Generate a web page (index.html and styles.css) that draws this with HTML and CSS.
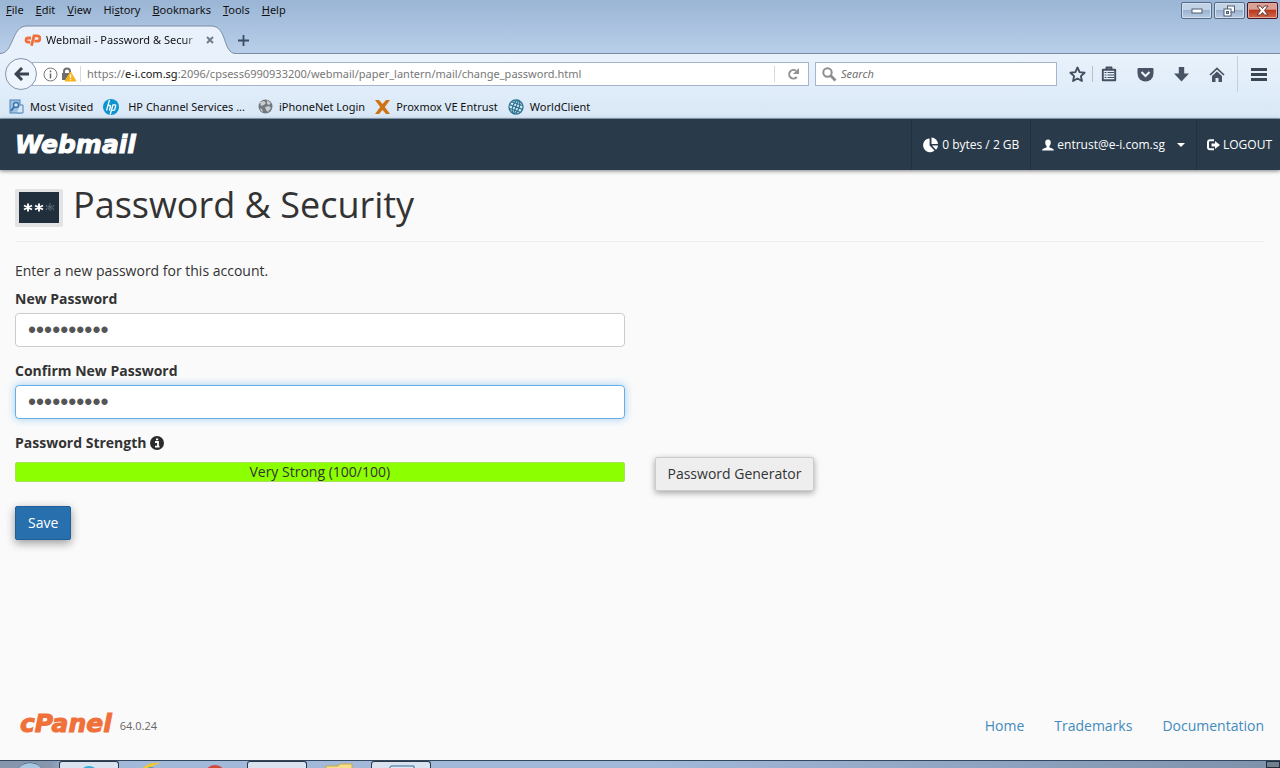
FILE: index.html
```html
<!DOCTYPE html>
<html lang="en">
<head>
<meta charset="utf-8">
<title>Webmail - Password &amp; Security</title>
<link rel="stylesheet" href="styles.css">
</head>
<body>
<div class="browser">
  <div class="titlebar">
    <nav class="menubar">
      <button type="button"><u>F</u>ile</button>
      <button type="button"><u>E</u>dit</button>
      <button type="button"><u>V</u>iew</button>
      <button type="button">Hi<u>s</u>tory</button>
      <button type="button"><u>B</u>ookmarks</button>
      <button type="button"><u>T</u>ools</button>
      <button type="button"><u>H</u>elp</button>
    </nav>
    <div class="window-controls">
      <button type="button" class="win-btn" aria-label="Minimize"><svg width="12" height="6" viewBox="0 0 12 6"><rect x="1" y="1" width="10" height="4" fill="#fff" stroke="#4c5c74"/></svg></button>
      <button type="button" class="win-btn" aria-label="Restore"><svg width="13" height="12" viewBox="0 0 13 12"><rect x="4.500" y="1" width="7" height="6" fill="#fff" stroke="#4c5c74"/><rect x="1" y="4" width="7" height="7" fill="#fff" stroke="#4c5c74"/><rect x="3.500" y="6.500" width="2" height="2" fill="#9db4d0" stroke="#4c5c74"/></svg></button>
      <button type="button" class="win-btn win-close" aria-label="Close"><svg width="13" height="11" viewBox="0 0 13 11"><path d="M1 1h3.500l2 2.500 2-2.500H12L8.500 5.500 12 10H8.500l-2-2.500-2 2.500H1l3.500-4.500z" fill="#fff" stroke="#66382f"/></svg></button>
    </div>
  </div>

  <div class="tabstrip">
    <div class="tab">
      <svg class="tab-shape" viewBox="0 0 236 29" preserveAspectRatio="none"><path d="M0 28.500C14 28.500 11 1 27 1H211C228 1 222 28.500 236 28.500V29H0z" fill="#e9f2fc"/><path d="M0 28.500C14 28.500 11 1 27 1H211C228 1 222 28.500 236 28.500" fill="none" stroke="#7c8ca3"/></svg>
      <svg class="tab-icon" width="17" height="12" viewBox="0 0 17 12" fill="none" stroke="#f0703a" stroke-width="2.800"><path d="M7 4H4.300a2 2 0 0 0-.3 4.200H6.200M7.500 11.800 10 1.800h3.200a2.500 2.500 0 0 1 0 5.400H10.500"/></svg>
      <span class="tab-title">Webmail - Password &amp; Secur</span>
      <button type="button" class="tab-close" aria-label="Close tab"><svg width="8" height="8" viewBox="0 0 8 8"><path d="M1 1l6 6M7 1L1 7" stroke="#6f7b8b" stroke-width="2"/></svg></button>
    </div>
    <button type="button" class="new-tab" aria-label="New tab"><svg width="11" height="11" viewBox="0 0 11 11"><path d="M5.500 0v11M0 5.500h11" stroke="#3c4c60" stroke-width="1.800"/></svg></button>
  </div>

  <div class="navbar">
    <button type="button" class="back" aria-label="Back"><svg width="15" height="14" viewBox="0 0 15 14"><path d="M8 1L2 7l6 6M2.500 7H15" fill="none" stroke="#3b4552" stroke-width="3"/></svg></button>
    <div class="urlbar">
      <svg width="15" height="15" viewBox="0 0 15 15"><circle cx="7.500" cy="7.500" r="6.500" fill="none" stroke="#777"/><path d="M7.500 6.500V11.500M7.500 3.500v1.700" stroke="#666" stroke-width="1.500"/></svg>
      <svg width="16" height="15" viewBox="0 0 16 15"><path d="M3 7V4.500a3 3 0 0 1 6 0V7" fill="none" stroke="#6f6f6f" stroke-width="2"/><rect x="1" y="6" width="9" height="7" fill="#6f6f6f"/><path d="M9.500 5L15 14H4z" fill="#f6b31b" stroke="#f6b31b" stroke-linejoin="round"/><path d="M9.500 7.500V11M9.500 12v1.200" stroke="#fff" stroke-width="1.300"/></svg>
      <span class="divider"></span>
      <div class="url">https://<b>e-i.com.sg</b>:2096/cpsess6990933200/webmail/paper_lantern/mail/change_password.html</div>
      <span class="divider"></span>
      <button type="button" class="reload" aria-label="Reload"><svg width="13" height="12" viewBox="0 0 13 12"><path d="M9.800 9A4.300 4.300 0 1 1 9 2.800" fill="none" stroke="#929292" stroke-width="2"/><path d="M12 0v6H6z" fill="#929292"/></svg></button>
    </div>
    <label class="searchbar">
      <svg width="15" height="15" viewBox="0 0 15 15" fill="none" stroke="#8d8d8d"><circle cx="5.500" cy="5.500" r="4.200" stroke-width="2"/><path d="M8.500 8.500l5 5" stroke-width="2.800"/></svg>
      <input type="text" placeholder="Search" aria-label="Search">
    </label>
    <div class="tools">
      <button type="button" class="tool star" aria-label="Bookmark"><svg width="17" height="17" viewBox="0 0 17 17"><path d="M8.500 1.500l2.100 4.600 5 .6-3.700 3.400 1 4.900-4.400-2.500L4.100 15l1-4.900L1.400 6.700l5-.6z" fill="none" stroke="#434f60" stroke-width="1.900" stroke-linejoin="round"/></svg></button>
      <button type="button" class="tool" aria-label="Bookmarks list"><svg width="16" height="16" viewBox="0 0 16 16"><path d="M5.500 3V1.500h5V3M1.800 3.800h12.400v10.400H1.800z" fill="none" stroke="#434f60" stroke-width="1.900" stroke-linejoin="round"/><path d="M3.500 6.500h2M6.500 6.500h6.500M3.500 9h2M6.500 9h6.500M3.500 11.500h2M6.500 11.500h6.500" stroke="#434f60" stroke-width="1.200"/></svg></button>
      <button type="button" class="tool" aria-label="Pocket"><svg width="17" height="15" viewBox="0 0 17 15"><path d="M1.500 1h14q1 0 1 1v4.500a8 8 0 0 1-16 0V2q0-1 1-1z" fill="#485365"/><path d="M4.500 5l4 4 4-4" fill="none" stroke="#eef4fb" stroke-width="2"/></svg></button>
      <button type="button" class="tool" aria-label="Downloads"><svg width="15" height="15" viewBox="0 0 15 15"><path d="M4.800 0h5.400v6.500H15L7.500 14.500 0 6.500h4.800z" fill="#485365"/></svg></button>
      <button type="button" class="tool" aria-label="Home"><svg width="16" height="15" viewBox="0 0 16 15"><path d="M1 8l7-6.500L15 8" fill="none" stroke="#485365" stroke-width="1.700"/><path d="M3 9l5-4.500L13 9v6H9.500v-4h-3v4H3z" fill="#485365"/></svg></button>
      <button type="button" class="tool menu" aria-label="Open menu"><svg width="16" height="13" viewBox="0 0 16 13"><path d="M0 1.500h16M0 6.500h16M0 11.500h16" stroke="#3b4655" stroke-width="2.800"/></svg></button>
    </div>
  </div>

  <nav class="bookmarks">
    <a href="#"><svg width="15" height="15" viewBox="0 0 15 15"><rect x="1" y="1" width="10" height="13" fill="#9ec4e6" stroke="#4f83b2"/><path d="M11 6h3v8H8" fill="#d5e6f5" stroke="#4f83b2"/><circle cx="7" cy="6" r="2.500" fill="#d5e6f5" stroke="#3b72a6" stroke-width="1.400"/><path d="M5 8l-3 4" stroke="#3b72a6" stroke-width="2"/></svg><span>Most Visited</span></a>
    <a href="#" class="hp"><svg width="16" height="16" viewBox="0 0 16 16"><circle cx="8" cy="8" r="8" fill="#0c94d0"/><path d="M6.500 1L3.500 11.500M5 6.500h1.800q1 0 .7 1L6.400 11.500M7.200 15.500L10 5.800h2q1 0 .7 1l-.9 3.500q-.3 1-1.300 1H9" fill="none" stroke="#fff" stroke-width="1.300"/></svg><span>HP Channel Services ...</span></a>
    <a href="#"><svg width="15" height="15" viewBox="0 0 15 15"><circle cx="7.500" cy="7.500" r="7" fill="#72787f"/><path d="M2 3l4-1 2 2-2 2-3 1zM9 1l4 3-2 2-2-1zM7 8l4-1 2 2-3 4-2-2zM2 9l2 1 1 3-2-1z" fill="#c7ccd1"/></svg><span>iPhoneNet Login</span></a>
    <a href="#"><svg width="15" height="14" viewBox="0 0 15 14"><path d="M0 0h4l3.500 4L11 0h4L9.800 7 15 14h-4l-3.500-4L4 14H0l5.200-7z" fill="#cf7212"/></svg><span>Proxmox VE Entrust</span></a>
    <a href="#"><svg width="16" height="16" viewBox="0 0 16 16" fill="none" stroke="#2d7593" stroke-width="1.300"><circle cx="8" cy="8" r="7" fill="#dcebf2"/><g transform="rotate(20 8 8)"><ellipse cx="8" cy="8" rx="3.200" ry="7"/><path d="M8 1v14M1 8h14M2 4.500h12M2 11.500h12"/></g></svg><span>WorldClient</span></a>
  </nav>
</div>

<header class="topbar">
  <a href="#" class="brand">Webmail</a>
  <div class="top-items">
    <div class="top-item quota"><svg width="16" height="16" viewBox="0 0 17 16" fill="#fff"><path d="M7 1v7.500l5.200 5.300A7.300 7.300 0 1 1 7 1z"/><path d="M9 0a7 7 0 0 1 6.800 7H9z"/><path d="M9.500 8.500H16a7 7 0 0 1-2.200 4.500z"/></svg><span>0 bytes / 2 GB</span></div>
    <button type="button" class="top-item user"><svg width="12" height="12" viewBox="0 0 13 12"><path d="M6.500 0c2 0 3 1.300 3 3.200S8.800 6.500 8 7.200V8.500c.7.800 4.500 1 5 3.500H0c.5-2.500 4.300-2.700 5-3.500V7.200C4.200 6.500 3.500 5.100 3.500 3.200S4.500 0 6.500 0z" fill="#fff"/></svg><span>entrust@e-i.com.sg</span><i class="caret"></i></button>
    <a href="#" class="top-item logout"><svg width="13" height="12" viewBox="0 0 13 12"><path d="M7 1.200H3a2 2 0 0 0-2 2v5a2 2 0 0 0 2 2h4" fill="none" stroke="#fff" stroke-width="2"/><path d="M4.500 4.500H8V2l5 4-5 4V7.500H4.500z" fill="#fff"/></svg><span>LOGOUT</span></a>
  </div>
</header>

<main class="content">
  <div class="page-head">
    <svg width="48" height="40" viewBox="0 0 48 40"><rect x="0" y="1" width="48" height="38" rx="2" fill="#e2e3e4"/><rect x="4" y="4" width="40" height="31" fill="#212f3d"/><g stroke="#fff" stroke-width="1.900"><path d="M13 15.500v8M9 17.500l8 4M17 17.500l-8 4M24 15.500v8M20 17.500l8 4M28 17.500l-8 4"/></g><path d="M35 15.500v8M31 17.500l8 4M39 17.500l-8 4" stroke="#66727d" stroke-width="1.800" stroke-dasharray="1 1"/></svg>
    <h1>Password &amp; Security</h1>
  </div>
  <form>
    <p>Enter a new password for this account.</p>
    <div class="half">
      <label for="new-pw">New Password</label>
      <input class="field" id="new-pw" type="password" value="abcdefghij">
      <label for="confirm-pw">Confirm New Password</label>
      <input class="field focused" id="confirm-pw" type="password" value="abcdefghij">
    </div>
    <div class="strength-label">Password Strength <svg width="14" height="14" viewBox="0 0 14 14"><circle cx="7" cy="7" r="7" fill="#2b2b2b"/><path d="M5 6h3v4.500M5 10.700h4.500M6 3.300h2.200" fill="none" stroke="#fff" stroke-width="1.800"/></svg></div>
    <div class="strength-row">
      <div class="meter">Very Strong (100/100)</div>
      <div><button type="button" class="btn">Password Generator</button></div>
    </div>
    <button type="submit" class="btn primary">Save</button>
  </form>
</main>

<footer class="footer">
  <a href="#" class="cpanel">cPanel</a>
  <span class="version">64.0.24</span>
  <nav class="links">
    <a href="#">Home</a>
    <a href="#">Trademarks</a>
    <a href="#">Documentation</a>
  </nav>
</footer>

<div class="taskbar">
  <div class="task start"><svg width="32" height="8" viewBox="0 0 32 8"><circle cx="16" cy="17" r="15" fill="#7fa3c4" stroke="#29435e"/><path d="M4 8a15 15 0 0 1 24 0" fill="#a8c6e0"/></svg></div>
  <div class="task open"><svg width="24" height="8" viewBox="0 0 24 8"><circle cx="12" cy="14" r="10" fill="#35aed6"/></svg></div>
  <div class="task"><svg width="24" height="8" viewBox="0 0 24 8"><path d="M3 8C7 3 14 1 22 2c-5 1-9 3-11 6z" fill="#f1c92f"/><circle cx="12" cy="12" r="6" fill="#4a93d3"/></svg></div>
  <div class="task"><svg width="24" height="8" viewBox="0 0 24 8"><circle cx="12" cy="15" r="11" fill="#d2473c"/></svg></div>
  <div class="task open"><svg width="24" height="8" viewBox="0 0 24 8"><path d="M4 8q1-2 4-2h7q4 0 5 2z" fill="#a3a077"/></svg></div>
  <div class="task"><svg width="30" height="8" viewBox="0 0 30 8"><path d="M2 8V5h12l2-2h12v5z" fill="#f5df8b" stroke="#c9a845"/></svg></div>
  <div class="task open"><svg width="30" height="8" viewBox="0 0 30 8"><path d="M2 8l3-4h23v4z" fill="#d8e9f6" stroke="#39698f"/></svg></div>
  <div class="show-desktop"></div>
</div>
</body>
</html>
```
FILE: styles.css
```css
* { box-sizing: border-box; }
body {
  margin: 0;
  min-height: 100vh;
  display: flex;
  flex-direction: column;
  background: #fafafa;
  color: #333;
  font: 14px/20px "Open Sans", sans-serif;
}
button, input { font: inherit; color: inherit; }
button { padding: 0; border: 0; background: none; }
a { text-decoration: none; color: inherit; }
svg { display: block; flex: none; }

/* browser window */
.browser {
  color: #111;
  font: 11px/16px "Noto Sans", sans-serif;
  background: linear-gradient(#9ab5d5, #b9cfe9 53px, #e9f2fc 54px, #d9e8f7 100%);
  border-bottom: 1px solid #8fa5bb;
}
.titlebar { display: flex; justify-content: space-between; height: 24px; }
.menubar { display: flex; align-items: center; gap: 12px; padding: 0 6px; height: 20px; }
.window-controls { display: flex; align-items: flex-start; gap: 2px; padding: 2px 2px 0; }
.win-btn {
  display: grid;
  place-items: center;
  width: 31px;
  height: 17px;
  border: 1px solid #586b86;
  border-radius: 2px;
  background: linear-gradient(#c3d3e6 45%, #9bb2ce 50%, #b8cce4);
  box-shadow: inset 0 0 0 1px #d3e0ef;
}
.win-close { border-color: #4b1520; background: linear-gradient(#dba095 40%, #b93a20 50%, #d1694a); box-shadow: inset 0 0 0 1px #e0aaa0; }

.tabstrip { display: flex; height: 30px; border-bottom: 1px solid #7c8ca3; }
.tab {
  position: relative;
  display: flex;
  align-items: center;
  width: 236px;
  height: 30px;
  padding: 2px 20px 0 24px;
}
.tab-shape { position: absolute; inset: 1px 0 0; width: 100%; height: 29px; }
.tab-icon, .tab-title, .tab-close { position: relative; }
.tab-title {
  flex: 1;
  margin-left: 5px;
  overflow: hidden;
  white-space: nowrap;
  mask-image: linear-gradient(90deg, #000 90%, transparent);
}
.tab-close { margin: 0 2px 0 6px; }
.new-tab { margin-left: 2px; padding: 3px 0 0; }

.navbar { display: flex; align-items: center; height: 40px; padding-left: 5px; }
.back {
  position: relative;
  display: grid;
  place-items: center;
  width: 32px;
  height: 32px;
  border: 1px solid #8295ad;
  border-radius: 50%;
  background: #eff5fc;
}
.urlbar, .searchbar { display: flex; align-items: center; height: 24px; border: 1px solid #a3b6cc; background: #fff; }
.urlbar { flex: 1; min-width: 0; margin-left: -5px; padding-left: 10px; gap: 3px; }
.url { flex: 1; min-width: 0; padding-left: 3px; overflow: hidden; white-space: nowrap; color: #777; }
.url b { font-weight: 400; color: #111; }
.divider { width: 1px; height: 16px; background: #d5dbe2; }
.reload { width: 30px; display: grid; place-items: center; }
.searchbar { flex: 0 1 242px; margin-left: 6px; padding-left: 6px; gap: 4px; font-weight: 400; }
.searchbar input { flex: 1; min-width: 0; border: 0; outline: 0; padding: 0; background: none; font-family: "Open Sans", sans-serif; }
.searchbar input::placeholder { color: #666; font-style: italic; }
.tools { display: flex; align-items: center; padding-left: 4px; }
.tool { display: grid; place-items: center; width: 36px; height: 36px; }
.star { width: 32px; height: 16px; margin-right: -2px; padding-left: 2px; border-right: 1px solid #b3c0d0; }
.menu { width: 43px; margin-left: 2px; border-left: 1px solid #c2cfde; }

.bookmarks { display: flex; align-items: center; gap: 10px; height: 24px; padding: 1px 9px 0; }
.bookmarks a { display: flex; align-items: center; gap: 6px; white-space: nowrap; }
.bookmarks .hp { gap: 9px; padding-right: 3px; }

/* webmail header */
.topbar {
  display: flex;
  justify-content: space-between;
  height: 51px;
  padding-left: 15px;
  color: #fff;
  background: #293a4a;
  box-shadow: 0 1px 4px rgba(0, 0, 0, .5);
  font-size: 12px;
}
.brand { font: italic bold 25px/52px "DejaVu Sans", sans-serif; -webkit-text-stroke: 1px #fff; }
.top-items { display: flex; }
.top-item { display: flex; align-items: center; gap: 3px; padding: 0 11px; border-left: 1px solid #223140; }
.caret { margin-left: 9px; border: 4px solid transparent; border-top-color: #fff; border-bottom: 0; }
.logout { padding: 0 8px 0 10px; }

/* page */
.content { flex: 1; padding: 14px 16px 16px 15px; }
.page-head { display: flex; align-items: flex-start; gap: 10px; padding-bottom: 13px; border-bottom: 1px solid #eee; }
.page-head svg { margin-top: 4px; }
h1 { margin: 0; font-weight: 400; font-size: 36px; line-height: 42px; }
p { margin: 19px 0 8px; }
.half { width: 50%; padding-right: 15px; }
.half label, .strength-label { display: block; font-weight: 700; }
.field {
  display: block;
  width: 100%;
  height: 34px;
  margin: 4px 0 14px;
  padding: 0 12px;
  color: #555;
  background: #fff;
  border: 1px solid #ccc;
  border-radius: 4px;
  outline: 0;
  font: 23px "Liberation Sans", sans-serif;
}
.focused { border-color: #66afe9; box-shadow: 0 0 8px rgba(102, 175, 233, .6); }
.strength-label { display: flex; align-items: center; gap: 4px; }
.strength-row { display: grid; grid-template-columns: 1fr 1fr; gap: 30px; margin: 4px 0 15px; }
.meter { height: 20px; margin-top: 5px; text-align: center; line-height: 18px; background: #8cff00; border: 1px solid #a8e05a; border-radius: 2px; }
.btn {
  height: 34px;
  padding: 0 12px;
  background: #eee;
  border: 1px solid #ccc;
  border-radius: 2px;
  box-shadow: 0 2px 6px rgba(0, 0, 0, .35);
}
.primary { color: #fff; background: #286fad; border-color: #1f5f99; box-shadow: 0 3px 10px rgba(0, 0, 0, .4); }

.footer { display: flex; align-items: center; padding: 0 16px 18px 20px; }
.cpanel { font: italic bold 25px/36px "DejaVu Sans", sans-serif; color: #f0703a; -webkit-text-stroke: 1px #f0703a; }
.version { margin: 4px 0 0 8px; font-size: 11px; color: #666; }
.links { display: flex; gap: 30px; margin: 4px 0 0 auto; color: #428bbd; }

/* taskbar */
.taskbar {
  display: flex;
  height: 8px;
  overflow: hidden;
  background: linear-gradient(90deg, #8596ad 50px, #a3b9d9 70px, #a3b9d9 50%, #7d91ab);
  border-top: 1px solid #33475f;
}
.task { display: flex; justify-content: center; width: 64px; }
.start { width: 59px; }
.open { background: #d9e3ef; border: 1px solid #2c3947; border-bottom: 0; border-radius: 3px 3px 0 0; width: 60px; }
.show-desktop { margin-left: auto; width: 14px; background: #71808f; border: 1px solid #222e3a; }
```
